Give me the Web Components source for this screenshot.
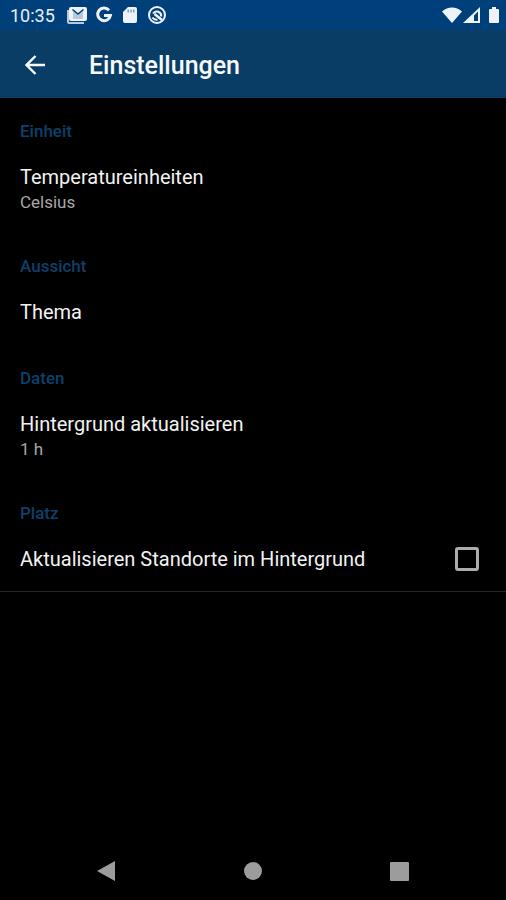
<!DOCTYPE html>
<html lang="de">
<head>
<meta charset="utf-8">
<meta name="viewport" content="width=device-width, initial-scale=1">
<title>Einstellungen</title>
<style>
  html, body { margin: 0; background: #000; }
  body { font-family: Roboto, "Liberation Sans", sans-serif; color: #f2f2f2; }
</style>
</head>
<body>
<settings-screen>
  <status-bar slot="top" time="10:35"></status-bar>
  <app-bar slot="top">Einstellungen</app-bar>
  <pref-group heading="Einheit">
    <pref-item>Temperatureinheiten<span slot="summary">Celsius</span></pref-item>
  </pref-group>
  <pref-group heading="Aussicht">
    <pref-item>Thema</pref-item>
  </pref-group>
  <pref-group heading="Daten">
    <pref-item>Hintergrund aktualisieren<span slot="summary">1 h</span></pref-item>
  </pref-group>
  <pref-group heading="Platz" divided>
    <pref-check>Aktualisieren Standorte im Hintergrund</pref-check>
  </pref-group>
  <nav-bar slot="bottom"></nav-bar>
</settings-screen>

<script>
  const define = (name, html, setup) => {
    const template = document.createElement('template');
    template.innerHTML = html;
    customElements.define(name, class extends HTMLElement {
      constructor() {
        super();
        this.attachShadow({ mode: 'open' }).append(template.content.cloneNode(true));
      }
      connectedCallback() { if (setup) setup(this, this.shadowRoot); }
    });
  };

  define('settings-screen', `
    <style>
      :host { display: flex; flex-direction: column; min-height: 100vh; background: #000; }
      main { flex: 1; }
    </style>
    <header><slot name="top"></slot></header>
    <main><slot></slot></main>
    <slot name="bottom"></slot>`);

  define('status-bar', `
    <style>
      :host { display: flex; align-items: center; height: 30px; padding: 0 6px 0 10px;
              background: #00407a; color: #e8eef6; font-size: 18px; line-height: 30px; }
      .left { display: flex; align-items: center; gap: 8px; flex: 1; }
      .right { display: flex; align-items: center; gap: 1px; }
      time { margin-right: 4px; padding-top: 2px; }
      svg { display: block; fill: #eef3f9; }
    </style>
    <div class="left">
      <time></time>
      <svg width="20" height="18" viewBox="0 0 20 18" aria-hidden="true">
        <path fill="#b9c9dc" d="M0 4h2v12h15v2H2a2 2 0 0 1-2-2z"/>
        <path fill="#eef3f9" d="M4 1h14a2 2 0 0 1 2 2v10a2 2 0 0 1-2 2H4a2 2 0 0 1-2-2V3a2 2 0 0 1 2-2z"/>
        <path fill="#b9c9dc" d="M6 5v8h10V5l-5 4z"/>
        <path fill="none" stroke="#00407a" stroke-width="1.600" d="M5.500 3.500L11 8l5.500-4.500"/>
      </svg>
      <svg width="18" height="18" viewBox="0 0 18 18" aria-hidden="true">
        <path fill="none" stroke="#eef3f9" stroke-width="3" d="M14 4.200A6.400 6.400 0 1 0 15.400 9.500H9"/>
      </svg>
      <svg width="18" height="18" viewBox="0 0 18 18" aria-hidden="true">
        <path d="M7 1h7a2 2 0 0 1 2 2v12a2 2 0 0 1-2 2H4a2 2 0 0 1-2-2V6z"/>
        <path fill="#7f9dbf" d="M6.500 3.500H8v3H6.500zM9.300 3.500h1.500v3H9.300zM12 3.500h1.500v3H12z"/>
      </svg>
      <svg width="20" height="20" viewBox="0 0 20 20" aria-hidden="true">
        <g fill="none" stroke="#eef3f9" stroke-width="2">
          <circle cx="10" cy="10" r="8"/>
          <path d="M14.200 11.500A4.500 4.500 0 0 0 6 8.500"/>
          <path stroke-width="2.600" d="M7.500 9l7.500 6"/>
          <path d="M5.500 12.500a5 5 0 0 0 5 2.200"/>
        </g>
      </svg>
    </div>
    <div class="right">
      <svg width="20" height="16" viewBox="0 0 20 16" aria-hidden="true"><path d="M0 4.500C6-.800 14-.800 20 4.500L10 16z"/></svg>
      <svg width="18" height="16" viewBox="0 0 18 16" aria-hidden="true"><path fill-rule="evenodd" d="M17 0v16H0zM11 8.500V14h4V4.500z"/></svg>
      <svg width="18" height="16" viewBox="0 0 18 16" aria-hidden="true"><path d="M10 0h4v2h2q1 0 1 1v12q0 1-1 1H8q-1 0-1-1V3q0-1 1-1h2z"/></svg>
    </div>`,
    (host, root) => { root.querySelector('time').textContent = host.getAttribute('time'); });

  define('app-bar', `
    <style>
      :host { display: flex; align-items: center; height: 66px; padding: 2px 17px 0; gap: 36px;
              background: #0a3d66; color: #f6f9fc; }
      button { display: grid; place-items: center; width: 36px; height: 36px; padding: 0;
               border: 0; background: none; color: inherit; }
      h1 { margin: 0; padding-top: 2px; font-size: 25px; font-weight: 500; line-height: 32px; }
    </style>
    <button type="button" aria-label="Zurück">
      <svg width="20" height="20" viewBox="0 0 20 20" fill="none" stroke="currentColor" stroke-width="2.400" aria-hidden="true">
        <path d="M20 10H2M10.500 1L1.500 10l9 9"/>
      </svg>
    </button>
    <h1><slot></slot></h1>`);

  define('pref-group', `
    <style>
      :host { display: block; }
      :host([divided]) { border-bottom: 1px solid #262626; }
      h2 { margin: 0; padding: 23px 20px 0; color: #0d406b; font-size: 17px; font-weight: 500; line-height: 20px; }
    </style>
    <h2></h2>
    <slot></slot>`,
    (host, root) => { root.querySelector('h2').textContent = host.getAttribute('heading'); });

  define('pref-item', `
    <style>
      :host { display: block; }
      button { display: flex; flex-direction: column; width: 100%; padding: 24px 20px 21px; border: 0;
               background: none; color: inherit; font: inherit; font-size: 20px; line-height: 24px; text-align: left; }
      ::slotted(span) { padding-top: 3px; color: #a8a8a8; font-size: 17px; line-height: 20px; }
    </style>
    <button type="button"><span><slot></slot></span><slot name="summary"></slot></button>`);

  define('pref-check', `
    <style>
      :host { display: block; }
      label { display: flex; align-items: center; justify-content: space-between; gap: 16px;
              padding: 24px 27px 20px 20px; font-size: 20px; line-height: 24px; }
      input { appearance: none; flex: none; width: 24px; height: 24px; margin: 0;
              border: 3px solid #acacac; border-radius: 3px; }
      input:checked { background: #acacac; }
    </style>
    <label><slot></slot><input type="checkbox"></label>`);

  define('nav-bar', `
    <style>
      :host { display: block; }
      nav { display: flex; padding: 0 33px; }
      button { flex: 1; display: grid; place-items: center; height: 58px; padding: 0; border: 0; background: none; }
      svg { display: block; fill: #9c9c9c; }
    </style>
    <nav aria-label="System">
      <button type="button" aria-label="Zurück"><svg width="20" height="20" viewBox="0 0 20 20"><path d="M19 0v20L1 10z"/></svg></button>
      <button type="button" aria-label="Startseite"><svg width="20" height="20" viewBox="0 0 20 20"><circle cx="10" cy="10" r="9"/></svg></button>
      <button type="button" aria-label="Übersicht"><svg width="20" height="20" viewBox="0 0 20 20"><rect x="0" y="1" width="19" height="19" rx="1"/></svg></button>
    </nav>`);
</script>
</body>
</html>
